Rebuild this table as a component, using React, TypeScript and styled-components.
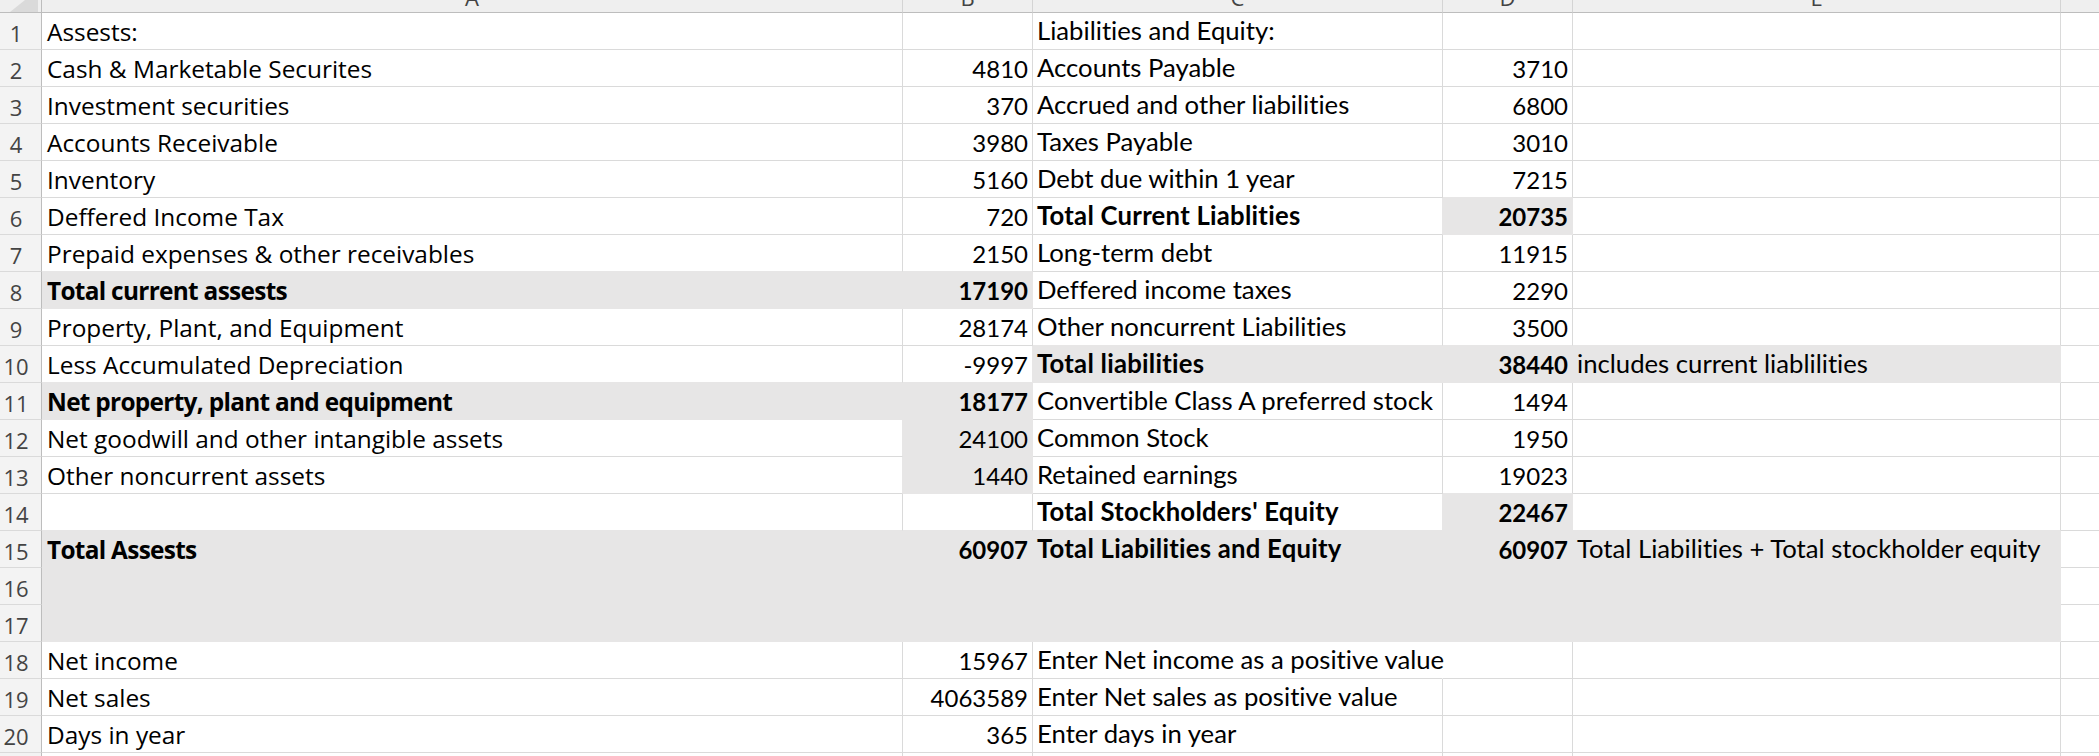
import React from 'react';
import styled, { createGlobalStyle, css } from 'styled-components';

const FILL = '#e7e6e6';
const GRID = '#dadada';
const HEAD_BG = '#efefef';
const HEAD_LINE = '#bdbdbd';

const GlobalStyle = createGlobalStyle`
  html, body { margin: 0; padding: 0; background: #fff; overflow: hidden; }
  #root { width: 2099px; height: 756px; overflow: hidden; }
  * { box-sizing: border-box; }
`;

type Kind = 'label' | 'num' | 'text' | 'blank';

interface CellData {
  t?: string;
  b?: boolean;
  f?: boolean;
  spill?: boolean;
}

const KINDS: Kind[] = ['label', 'num', 'text', 'num', 'text', 'blank'];
const LETTERS = ['A', 'B', 'C', 'D', 'E', 'F'];

const Sheet = styled.div`
  display: grid;
  grid-template-columns: 42px 861px 130px 410px 130px 488px 200px;
  grid-template-rows: 13px repeat(21, 37px);
  width: 2261px;
  background: #fff;
`;

const Corner = styled.div`
  background: ${HEAD_BG};
  border-right: 1px solid ${HEAD_LINE};
  border-bottom: 1px solid ${HEAD_LINE};
  overflow: hidden;
  svg { display: block; }
`;

const ColHead = styled.div`
  background: ${HEAD_BG};
  border-right: 1px solid #d4d4d4;
  border-bottom: 1px solid ${HEAD_LINE};
  overflow: hidden;
  display: flex;
  justify-content: center;
  align-items: flex-end;
  padding-bottom: 4px;
  font-family: 'Open Sans', 'Noto Sans', sans-serif;
  font-size: 22px;
  line-height: 1;
  color: #444;
`;

const RowHead = styled.div`
  background: #f3f3f3;
  border-right: 1px solid ${HEAD_LINE};
  border-bottom: 1px solid ${GRID};
  display: flex;
  justify-content: center;
  align-items: flex-end;
  padding: 0 9px 5px 0;
  font-family: 'Open Sans', 'Noto Sans', sans-serif;
  font-size: 22px;
  line-height: 1;
  color: #444;
`;

const kindStyles = {
  label: css<{ $bold?: boolean }>`
    font-family: 'Open Sans', 'Noto Sans', sans-serif;
    font-size: 24.4px;
    padding: 0 5px 5px 5px;
    letter-spacing: ${(p) => (p.$bold ? '-0.7px' : '0')};
  `,
  num: css`
    font-family: Lato, 'Liberation Sans', sans-serif;
    font-size: 24px;
    padding: 0 4px 5px 4px;
  `,
  text: css<{ $bold?: boolean }>`
    font-family: Lato, 'Liberation Sans', sans-serif;
    font-size: 25.7px;
    padding: 0 4px 5px 4px;
    letter-spacing: ${(p) => (p.$bold ? '0.25px' : '0')};
  `,
  blank: css`
    font-family: Lato, 'Liberation Sans', sans-serif;
    font-size: 25.7px;
  `,
};

const Cell = styled.div<{
  $kind: Kind;
  $fill?: boolean;
  $bold?: boolean;
  $spill?: boolean;
  $right: string;
  $bottom: string;
}>`
  display: flex;
  align-items: flex-end;
  justify-content: ${(p) => (p.$kind === 'num' ? 'flex-end' : 'flex-start')};
  background: ${(p) => (p.$fill ? FILL : '#fff')};
  border-right: 1px solid ${(p) => p.$right};
  border-bottom: 1px solid ${(p) => p.$bottom};
  white-space: nowrap;
  overflow: ${(p) => (p.$spill ? 'visible' : 'hidden')};
  position: ${(p) => (p.$spill ? 'relative' : 'static')};
  z-index: ${(p) => (p.$spill ? 1 : 'auto')};
  color: #000;
  line-height: 1;
  font-variant-ligatures: none;
  font-weight: ${(p) => (p.$bold ? 700 : 400)};
  ${(p) => kindStyles[p.$kind]}
`;

const E: CellData = {};

const rows: CellData[][] = [
  [{ t: 'Assests:' }, E, { t: 'Liabilities and Equity:' }, E, E, E],
  [{ t: 'Cash & Marketable Securites' }, { t: '4810' }, { t: 'Accounts Payable' }, { t: '3710' }, E, E],
  [{ t: 'Investment securities' }, { t: '370' }, { t: 'Accrued and other liabilities' }, { t: '6800' }, E, E],
  [{ t: 'Accounts Receivable' }, { t: '3980' }, { t: 'Taxes Payable' }, { t: '3010' }, E, E],
  [{ t: 'Inventory' }, { t: '5160' }, { t: 'Debt due within 1 year' }, { t: '7215' }, E, E],
  [{ t: 'Deffered Income Tax' }, { t: '720' }, { t: 'Total Current Liablities', b: true }, { t: '20735', b: true, f: true }, E, E],
  [{ t: 'Prepaid expenses & other receivables' }, { t: '2150' }, { t: 'Long-term debt' }, { t: '11915' }, E, E],
  [{ t: 'Total current assests', b: true, f: true }, { t: '17190', b: true, f: true }, { t: 'Deffered income taxes' }, { t: '2290' }, E, E],
  [{ t: 'Property, Plant, and Equipment' }, { t: '28174' }, { t: 'Other noncurrent Liabilities' }, { t: '3500' }, E, E],
  [
    { t: 'Less Accumulated Depreciation' },
    { t: '-9997' },
    { t: 'Total liabilities', b: true, f: true },
    { t: '38440', b: true, f: true },
    { t: 'includes current liablilities', f: true },
    E,
  ],
  [{ t: 'Net property, plant and equipment', b: true, f: true }, { t: '18177', b: true, f: true }, { t: 'Convertible Class A preferred stock' }, { t: '1494' }, E, E],
  [{ t: 'Net goodwill and other intangible assets' }, { t: '24100', f: true }, { t: 'Common Stock' }, { t: '1950' }, E, E],
  [{ t: 'Other noncurrent assets' }, { t: '1440', f: true }, { t: 'Retained earnings' }, { t: '19023' }, E, E],
  [E, E, { t: "Total Stockholders' Equity", b: true }, { t: '22467', b: true, f: true }, E, E],
  [
    { t: 'Total Assests', b: true, f: true },
    { t: '60907', b: true, f: true },
    { t: 'Total Liabilities and Equity', b: true, f: true },
    { t: '60907', b: true, f: true },
    { t: 'Total Liabilities + Total stockholder equity', f: true },
    E,
  ],
  [{ f: true }, { f: true }, { f: true }, { f: true }, { f: true }, E],
  [{ f: true }, { f: true }, { f: true }, { f: true }, { f: true }, E],
  [{ t: 'Net income' }, { t: '15967' }, { t: 'Enter Net income as a positive value', spill: true }, E, E, E],
  [{ t: 'Net sales' }, { t: '4063589' }, { t: 'Enter Net sales as positive value' }, E, E, E],
  [{ t: 'Days in year' }, { t: '365' }, { t: 'Enter days in year' }, E, E, E],
  [E, E, E, E, E, E],
];

function edge(self: CellData, other: CellData | undefined, spill?: boolean): string {
  if (self.f || (other && other.f)) return FILL;
  if (spill) return '#fff';
  return GRID;
}

export default function App() {
  return (
    <>
      <GlobalStyle />
      <Sheet>
        <Corner>
          <svg width="41" height="12" viewBox="0 0 41 12">
            <polygon points="10,12 38,12 38,0 25,0" fill="#dadada" />
          </svg>
        </Corner>
        {LETTERS.map((l) => (
          <ColHead key={l}>{l}</ColHead>
        ))}
        {rows.map((row, r) => (
          <React.Fragment key={r}>
            <RowHead>{r + 1}</RowHead>
            {row.map((c, i) => (
              <Cell
                key={i}
                $kind={KINDS[i]}
                $fill={c.f}
                $bold={c.b}
                $spill={c.spill}
                $right={edge(c, row[i + 1], c.spill)}
                $bottom={edge(c, rows[r + 1] ? rows[r + 1][i] : undefined)}
              >
                {c.t}
              </Cell>
            ))}
          </React.Fragment>
        ))}
      </Sheet>
    </>
  );
}
